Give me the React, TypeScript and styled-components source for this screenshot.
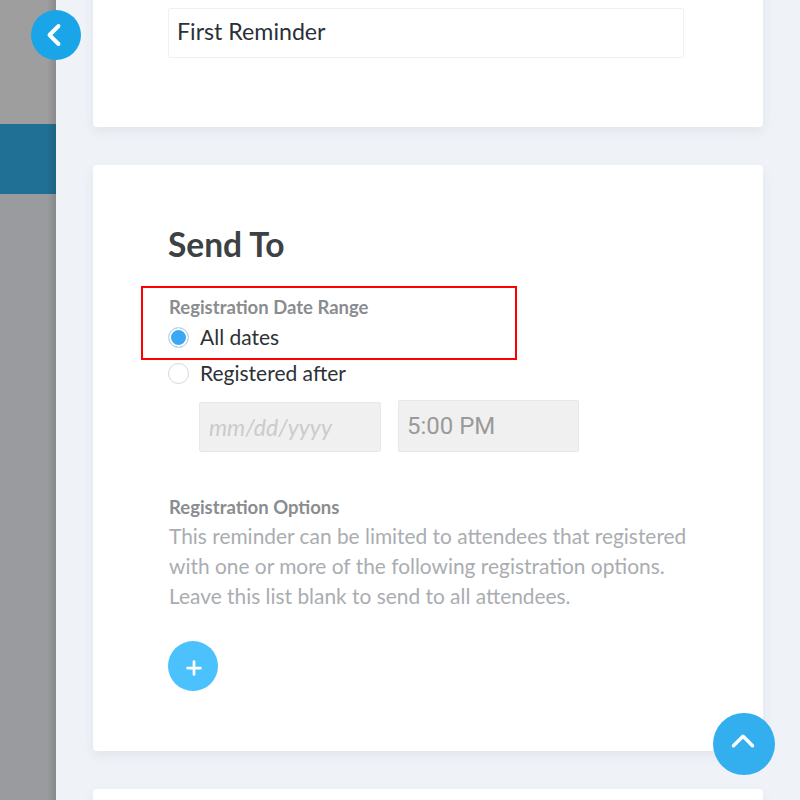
import React from 'react'
import styled, { createGlobalStyle } from 'styled-components'
import { ChevronLeft, ChevronUp, Plus } from 'lucide-react'

const GlobalStyle = createGlobalStyle`
    html, body {
        margin: 0;
        padding: 0;
        height: 800px;
        overflow: hidden;
        background: #eff2f7;
        font-family: Lato, "Noto Sans", sans-serif;
    }
`

const Page = styled.div`
    position: relative;
    display: flex;
    width: 800px;
    height: 800px;
    overflow: hidden;
`

const Sidebar = styled.aside`
    position: relative;
    flex: 0 0 56px;
    display: flex;
    flex-direction: column;
    background: #9a9b9e;

    &::after {
        content: '';
        position: absolute;
        top: 0;
        right: 0;
        bottom: 0;
        width: 9px;
        background: linear-gradient(to right, rgba(0, 0, 0, 0), rgba(0, 0, 0, 0.12));
    }
`

const SidebarTop = styled.div`
    height: 124px;
    background: #9e9e9e;
`

const SidebarActive = styled.div`
    height: 70px;
    background: #206f94;
`

const Main = styled.main`
    flex: 1;
    display: flex;
    flex-direction: column;
    gap: 38px;
    padding: 0 37px;
    margin-top: -40px;
`

const Card = styled.section<{ $height: number }>`
    flex: 0 0 ${ props => props.$height }px;
    box-sizing: border-box;
    width: 670px;
    padding: 0 75px;
    background: #fff;
    border-radius: 4px;
    box-shadow: 0 4px 12px rgba(40, 60, 90, 0.07);
`

const NameInput = styled.div`
    box-sizing: border-box;
    width: 516px;
    height: 50px;
    margin-top: 48px;
    padding-left: 8px;
    line-height: 44px;
    font-size: 23.2px;
    color: #2b2f38;
    background: #fff;
    border: 1px solid #eef0f3;
    border-radius: 2px;
`

const Title = styled.h2`
    margin: 59px 0 0;
    font-size: 33.5px;
    line-height: 40px;
    font-weight: 700;
    color: #3c4144;
`

const FieldLabel = styled.div<{ $top: number }>`
    margin-top: ${ props => props.$top }px;
    padding-left: 1px;
    font-size: 18.5px;
    line-height: 22px;
    font-weight: 700;
    color: #8a8d8f;
`

const RadioRow = styled.label<{ $top: number }>`
    display: flex;
    align-items: center;
    gap: 11px;
    height: 22px;
    margin-top: ${ props => props.$top }px;
    font-size: 21px;
    color: #2d3136;
`

const Radio = styled.span<{ $checked?: boolean }>`
    box-sizing: border-box;
    flex: none;
    width: 21px;
    height: 21px;
    margin-top: 2px;
    border-radius: 50%;
    border: 1px solid #d3d8de;
    background: ${ props => props.$checked ? '#3ba9f2' : '#fff' };
    box-shadow: ${ props => props.$checked ? 'inset 0 0 0 2px #fff' : 'none' };
`

const DateRow = styled.div`
    display: flex;
    align-items: flex-start;
    gap: 17px;
    margin: 17px 0 0 31px;
`

const Field = styled.div<{ $width: number, $height: number, $top: number }>`
    box-sizing: border-box;
    width: ${ props => props.$width }px;
    height: ${ props => props.$height }px;
    margin-top: ${ props => props.$top }px;
    padding-left: 9px;
    line-height: ${ props => props.$height - 2 }px;
    background: #f0f0f0;
    border: 1px solid #e8e8e8;
    border-radius: 2px;
`

const DateText = styled.span`
    font-size: 23px;
    font-style: italic;
    color: #cbcbcb;
`

const TimeText = styled.span`
    margin-left: -1px;
    font-family: Roboto, "Liberation Sans", sans-serif;
    font-size: 24px;
    color: #9a9a9a;
`

const Help = styled.p`
    width: 530px;
    margin: 3px 0 0;
    padding-left: 1px;
    font-size: 20.9px;
    line-height: 30px;
    color: #a9adb1;
`

const RoundButton = styled.button<{ $size: number, $color: string }>`
    display: flex;
    align-items: center;
    justify-content: center;
    width: ${ props => props.$size }px;
    height: ${ props => props.$size }px;
    padding: 0;
    border: 0;
    border-radius: 50%;
    color: #fff;
    background: ${ props => props.$color };
`

const AddButton = styled(RoundButton)`
    margin-top: 30px;
`

const BackButton = styled(RoundButton)`
    position: absolute;
    top: 10px;
    left: 31px;
`

const TopButton = styled(RoundButton)`
    position: absolute;
    top: 713px;
    left: 713px;
`

const BackIcon = styled(ChevronLeft)`
    margin-left: -4px;
`

const TopIcon = styled(ChevronUp)`
    margin: -7px 0 0 -2px;
`

const AddIcon = styled(Plus)`
    margin: 3px 0 0 1px;
`

const Highlight = styled.div`
    position: absolute;
    top: 286px;
    left: 141px;
    box-sizing: border-box;
    width: 376px;
    height: 74px;
    border: 2px solid #ff0000;
`

export default function App() {
    return (
        <Page>
            <GlobalStyle />
            <Sidebar>
                <SidebarTop />
                <SidebarActive />
            </Sidebar>

            <Main>
                <Card $height={167}>
                    <NameInput>First Reminder</NameInput>
                </Card>

                <Card $height={586}>
                    <Title>Send To</Title>
                    <FieldLabel $top={32}>Registration Date Range</FieldLabel>
                    <RadioRow $top={7}><Radio $checked />All dates</RadioRow>
                    <RadioRow $top={14}><Radio />Registered after</RadioRow>
                    <DateRow>
                        <Field $width={182} $height={50} $top={2}><DateText>mm/dd/yyyy</DateText></Field>
                        <Field $width={181} $height={52} $top={0}><TimeText>5:00 PM</TimeText></Field>
                    </DateRow>
                    <FieldLabel $top={44}>Registration Options</FieldLabel>
                    <Help>This reminder can be limited to attendees that registered with one or more of the following registration options. Leave this list blank to send to all attendees.</Help>
                    <AddButton $size={50} $color='#4bc1fd'><AddIcon size={22} strokeWidth={3} /></AddButton>
                </Card>

                <Card $height={60} />
            </Main>

            <BackButton $size={50} $color='#1aa5e8'><BackIcon size={36} strokeWidth={2.6} /></BackButton>
            <TopButton $size={62} $color='#33aff0'><TopIcon size={38} strokeWidth={2.2} /></TopButton>
            <Highlight />
        </Page>
    )
}
